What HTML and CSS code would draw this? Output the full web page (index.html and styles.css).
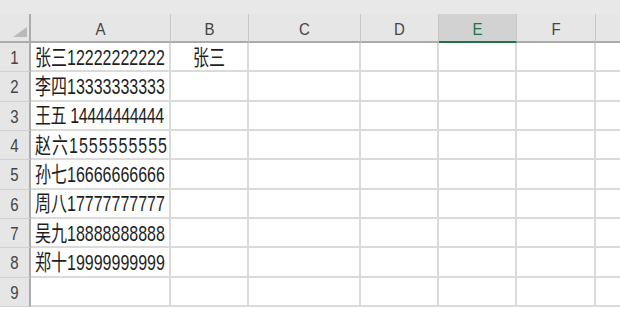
FILE: index.html
```html
<!DOCTYPE html>
<html lang="zh">

<head>
   <meta charset="UTF-8">
   <meta name="viewport" content="width=device-width, initial-scale=1.0">
   <title>Sheet1</title>
   <link rel="stylesheet" href="styles.css">
</head>

<body>
   <div class="topbar"></div>

   <div class="sheet">
      <!-- column headers -->
      <div class="corner"><span class="tri"></span></div>
      <div class="col-head"><span class="txt">A</span></div>
      <div class="col-head"><span class="txt">B</span></div>
      <div class="col-head"><span class="txt">C</span></div>
      <div class="col-head"><span class="txt">D</span></div>
      <div class="col-head selected"><span class="txt">E</span></div>
      <div class="col-head"><span class="txt">F</span></div>
      <div class="col-head"></div>

      <!-- row 1 -->
      <div class="row-head"><span class="txt">1</span></div>
      <div class="cell"><span class="txt">张三12222222222</span></div>
      <div class="cell center"><span class="txt">张三</span></div>
      <div class="cell"></div>
      <div class="cell"></div>
      <div class="cell"></div>
      <div class="cell"></div>
      <div class="cell"></div>

      <!-- row 2 -->
      <div class="row-head"><span class="txt">2</span></div>
      <div class="cell"><span class="txt">李四13333333333</span></div>
      <div class="cell"></div>
      <div class="cell"></div>
      <div class="cell"></div>
      <div class="cell"></div>
      <div class="cell"></div>
      <div class="cell"></div>

      <!-- row 3 -->
      <div class="row-head"><span class="txt">3</span></div>
      <div class="cell"><span class="txt tight">王五 14444444444</span></div>
      <div class="cell"></div>
      <div class="cell"></div>
      <div class="cell"></div>
      <div class="cell"></div>
      <div class="cell"></div>
      <div class="cell"></div>

      <!-- row 4 -->
      <div class="row-head"><span class="txt">4</span></div>
      <div class="cell"><span class="txt wide">赵六1555555555</span></div>
      <div class="cell"></div>
      <div class="cell"></div>
      <div class="cell"></div>
      <div class="cell"></div>
      <div class="cell"></div>
      <div class="cell"></div>

      <!-- row 5 -->
      <div class="row-head"><span class="txt">5</span></div>
      <div class="cell"><span class="txt">孙七16666666666</span></div>
      <div class="cell"></div>
      <div class="cell"></div>
      <div class="cell"></div>
      <div class="cell"></div>
      <div class="cell"></div>
      <div class="cell"></div>

      <!-- row 6 -->
      <div class="row-head"><span class="txt">6</span></div>
      <div class="cell"><span class="txt">周八17777777777</span></div>
      <div class="cell"></div>
      <div class="cell"></div>
      <div class="cell"></div>
      <div class="cell"></div>
      <div class="cell"></div>
      <div class="cell"></div>

      <!-- row 7 -->
      <div class="row-head"><span class="txt">7</span></div>
      <div class="cell"><span class="txt">吴九18888888888</span></div>
      <div class="cell"></div>
      <div class="cell"></div>
      <div class="cell"></div>
      <div class="cell"></div>
      <div class="cell"></div>
      <div class="cell"></div>

      <!-- row 8 -->
      <div class="row-head"><span class="txt">8</span></div>
      <div class="cell"><span class="txt">郑十19999999999</span></div>
      <div class="cell"></div>
      <div class="cell"></div>
      <div class="cell"></div>
      <div class="cell"></div>
      <div class="cell"></div>
      <div class="cell"></div>

      <!-- row 9 -->
      <div class="row-head"><span class="txt">9</span></div>
      <div class="cell"></div>
      <div class="cell"></div>
      <div class="cell"></div>
      <div class="cell"></div>
      <div class="cell"></div>
      <div class="cell"></div>
      <div class="cell"></div>
   </div>
</body>

</html>
```

FILE: styles.css
```css
* {
   margin: 0;
   padding: 0;
   box-sizing: border-box;
}

body {
   width: 620px;
   height: 309px;
   overflow: hidden;
   background-color: #fff;
   font-family: 'Liberation Sans', 'Noto Sans CJK SC', sans-serif;
   color: #1e1e1e;
}

.topbar {
   height: 14px;
   background-color: #e8e8e8;
}

.sheet {
   display: grid;
   grid-template-columns: 31px 140px 78px 112px 78px 78px 79px 24px;
   grid-template-rows: 29px repeat(9, 29.33px);
   width: 620px;
}

/* column G is cut off by the window, no line on its right */
.sheet > :nth-child(8n) {
   border-right: none;
}

/* the screenshot is stretched vertically, so text is too */
.txt {
   display: inline-block;
   font-size: 16px;
   line-height: 16px;
   white-space: nowrap;
   transform: scaleY(1.35);
}

.wide {
   letter-spacing: 1px;
}

.tight {
   letter-spacing: -0.4px;
}

.corner {
   background-color: #e6e6e6;
   border-right: 2px solid #ababab;
   border-bottom: 2px solid #ababab;
   display: flex;
   justify-content: flex-end;
   align-items: flex-end;
   padding: 0 2px 4px 0;
}

.tri {
   width: 0;
   height: 0;
   border-left: 14px solid transparent;
   border-bottom: 10px solid #b9b9b9;
}

.col-head {
   background-color: #e6e6e6;
   border-right: 1px solid #c6c6c6;
   border-bottom: 2px solid #ababab;
   display: flex;
   justify-content: center;
   align-items: center;
   padding-top: 3px;
   color: #444;
}

.col-head .txt {
   font-size: 15px;
   transform: scaleY(1.15);
}

.col-head.selected {
   background-color: #d2d2d2;
   border-bottom: 2px solid #217346;
   color: #217346;
}

.row-head {
   background-color: #e6e6e6;
   border-right: 2px solid #ababab;
   border-bottom: 1px solid #d0d0d0;
   display: flex;
   justify-content: center;
   align-items: center;
   padding-top: 2px;
   color: #444;
}

.row-head .txt {
   font-size: 15px;
   transform: scaleY(1.2);
}

.cell {
   border-right: 2px solid #dadada;
   border-bottom: 2px solid #dadada;
   display: flex;
   align-items: center;
   padding: 2px 0 0 4px;
}

.cell.center {
   justify-content: center;
   padding-left: 0;
}
```
